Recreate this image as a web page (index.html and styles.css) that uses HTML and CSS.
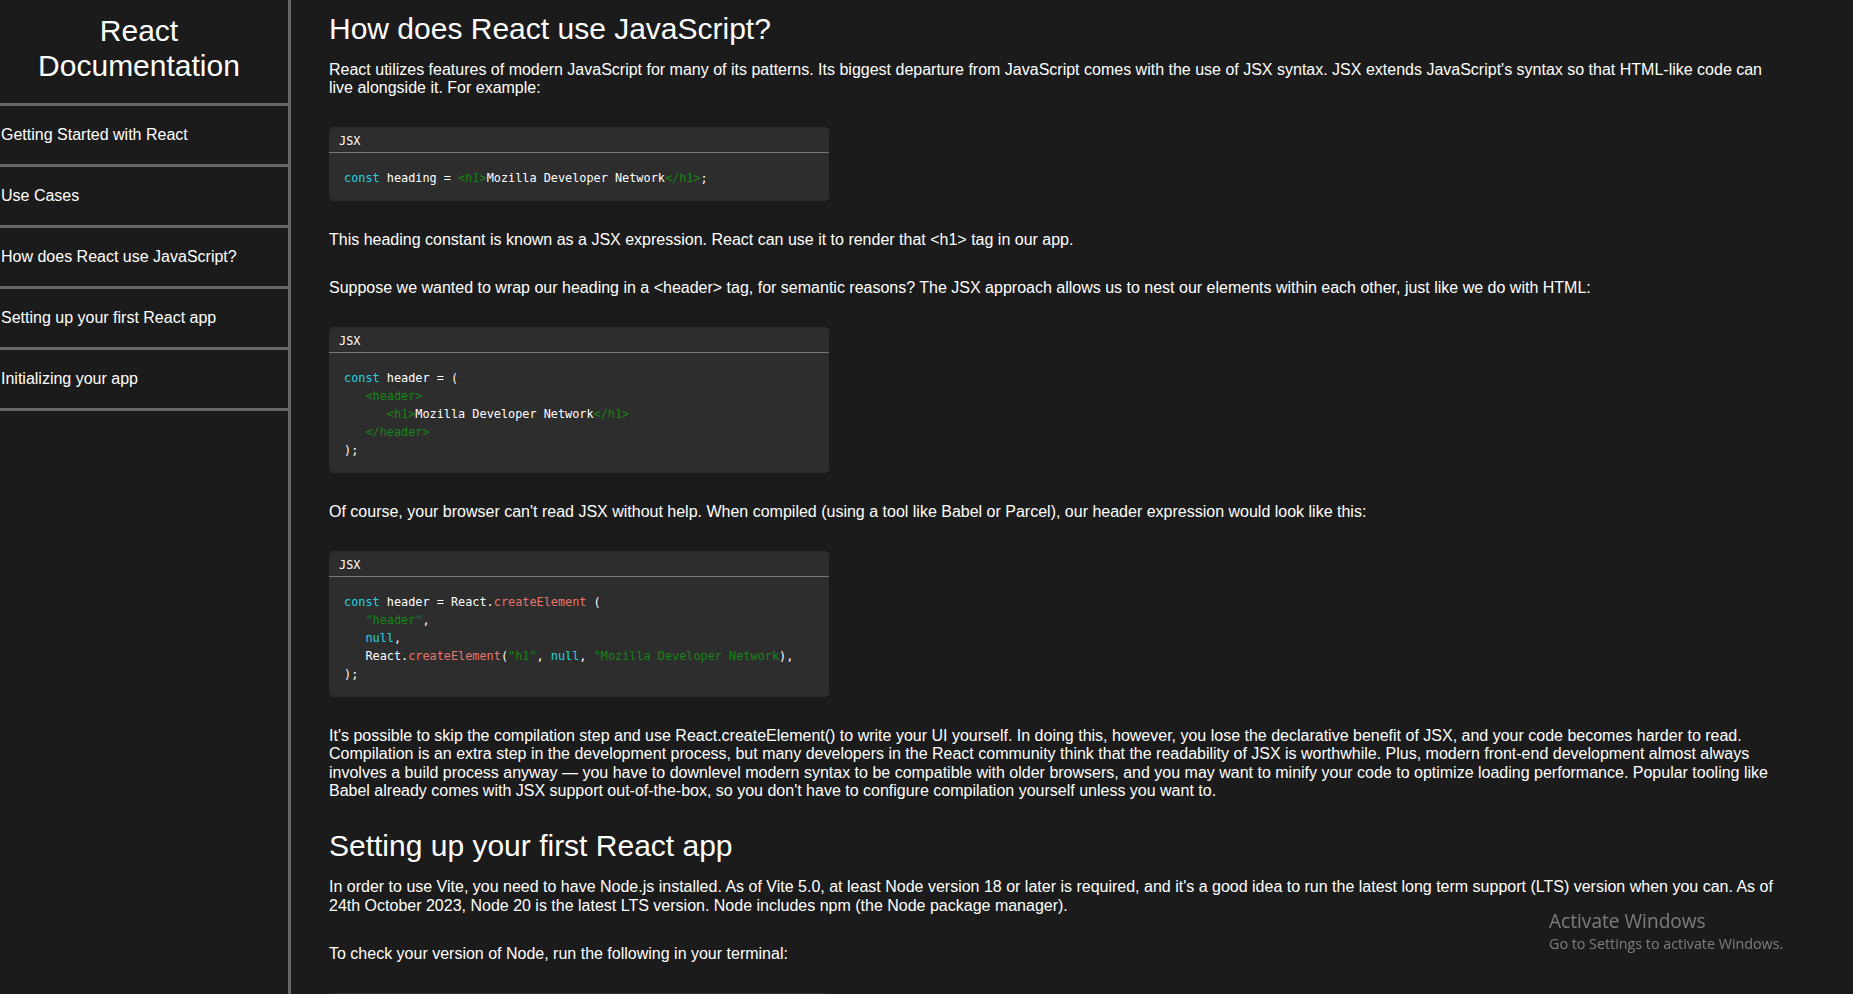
FILE: index.html
```html
<!DOCTYPE html>
<html lang="en">
<head>
<meta charset="utf-8">
<title>React Documentation</title>
<link rel="stylesheet" href="styles.css">
</head>
<body>
<div class="layout">
  <nav class="sidebar">
    <header class="side-title">React<br>Documentation</header>
    <a class="nav-link" href="#getting-started">Getting Started with React</a>
    <a class="nav-link" href="#use-cases">Use Cases</a>
    <a class="nav-link" href="#how-js">How does React use JavaScript?</a>
    <a class="nav-link" href="#setting-up">Setting up your first React app</a>
    <a class="nav-link" href="#initializing">Initializing your app</a>
  </nav>
  <main class="content">
    <section class="doc-section" id="how-js">
      <h2 class="sec-title">How does React use JavaScript?</h2>
      <p class="para">React utilizes features of modern JavaScript for many of its patterns. Its biggest departure from JavaScript comes with the use of JSX syntax. JSX extends JavaScript's syntax so that HTML-like code can live alongside it. For example:</p>
      <div class="code-block">
        <div class="code-head">JSX</div>
        <pre class="code-body"><span class="kw">const</span> heading = <span class="tag">&lt;h1&gt;</span>Mozilla Developer Network<span class="tag">&lt;/h1&gt;</span>;</pre>
      </div>
      <p class="para">This heading constant is known as a JSX expression. React can use it to render that &lt;h1&gt; tag in our app.</p>
      <p class="para">Suppose we wanted to wrap our heading in a &lt;header&gt; tag, for semantic reasons? The JSX approach allows us to nest our elements within each other, just like we do with HTML:</p>
      <div class="code-block">
        <div class="code-head">JSX</div>
        <pre class="code-body"><span class="kw">const</span> header = (
   <span class="tag">&lt;header&gt;</span>
      <span class="tag">&lt;h1&gt;</span>Mozilla Developer Network<span class="tag">&lt;/h1&gt;</span>
   <span class="tag">&lt;/header&gt;</span>
);</pre>
      </div>
      <p class="para">Of course, your browser can't read JSX without help. When compiled (using a tool like Babel or Parcel), our header expression would look like this:</p>
      <div class="code-block">
        <div class="code-head">JSX</div>
        <pre class="code-body"><span class="kw">const</span> header = React.<span class="fn">createElement</span> (
   <span class="str">"header"</span>,
   <span class="kw">null</span>,
   React.<span class="fn">createElement</span>(<span class="str">"h1"</span>, <span class="kw">null</span>, <span class="str">"Mozilla Developer Network</span>),
);</pre>
      </div>
      <p class="para para-long">It's possible to skip the compilation step and use React.createElement() to write your UI yourself. In doing this, however, you lose the declarative benefit of JSX, and your code becomes harder to read. Compilation is an extra step in the development process, but many developers in the React community think that the readability of JSX is worthwhile. Plus, modern front-end development almost always involves a build process anyway — you have to downlevel modern syntax to be compatible with older browsers, and you may want to minify your code to optimize loading performance. Popular tooling like Babel already comes with JSX support out-of-the-box, so you don't have to configure compilation yourself unless you want to.</p>
    </section>
    <section class="doc-section" id="setting-up">
      <h2 class="sec-title">Setting up your first React app</h2>
      <p class="para">In order to use Vite, you need to have Node.js installed. As of Vite 5.0, at least Node version 18 or later is required, and it's a good idea to run the latest long term support (LTS) version when you can. As of 24th October 2023, Node 20 is the latest LTS version. Node includes npm (the Node package manager).</p>
      <p class="para">To check your version of Node, run the following in your terminal:</p>
      <div class="code-block">
        <div class="code-head">bash</div>
        <pre class="code-body">node -v</pre>
      </div>
    </section>
  </main>
</div>
<div class="activate">
  <div class="activate-title">Activate Windows</div>
  <div class="activate-sub">Go to Settings to activate Windows.</div>
</div>
</body>
</html>
```

FILE: styles.css
```css
html, body {
  margin: 0;
  padding: 0;
  background: #1b1b1b;
  color: #ffffff;
  font-family: "Liberation Sans", Arial, sans-serif;
  font-size: 16px;
}

.layout {
  display: flex;
  align-items: stretch;
  min-height: 100vh;
}

.sidebar {
  flex: 0 0 288px;
  width: 288px;
  border-right: 3px solid #666666;
  display: flex;
  flex-direction: column;
}

.side-title {
  text-align: center;
  font-size: 30px;
  line-height: 34.5px;
  padding: 14px 10px 20px 0;
  border-bottom: 3px solid #666666;
}

.nav-link {
  display: flex;
  align-items: center;
  height: 58px;
  padding-left: 1px;
  border-bottom: 3px solid #666666;
  color: #ffffff;
  text-decoration: none;
  font-size: 16px;
}

.content {
  flex: 1 1 auto;
  min-width: 0;
  padding: 0 75px 0 38px;
}

.sec-title {
  font-size: 30px;
  font-weight: normal;
  line-height: 34.5px;
  margin: 12px 0 14px;
}

.doc-section + .doc-section .sec-title {
  margin-top: 0;
  margin-bottom: 15px;
}

.para {
  margin: 0 0 29.6px;
  line-height: 18.4px;
}

.para-long {
  margin-bottom: 28.6px;
}

.code-block {
  width: 500px;
  background: #2d2d2d;
  border-radius: 4px;
  margin: 0 0 29.6px;
  font-family: "DejaVu Sans Mono", "Liberation Mono", monospace;
  font-size: 11.85px;
}

.code-head {
  height: 22px;
  padding-top: 3px;
  line-height: 22px;
  padding-left: 10px;
  border-bottom: 1px solid #7a7a7a;
  color: #ffffff;
}

.code-body {
  margin: 0;
  padding: 16px 14px 14px 15px;
  font-family: inherit;
  font-size: inherit;
  line-height: 18.1px;
  color: #ffffff;
  white-space: pre;
}

.kw { color: #1fd3e2; }
.tag { color: #158515; }
.str { color: #158515; }
.fn { color: #e8746c; }

.activate {
  position: fixed;
  left: 1549px;
  top: 908px;
  color: rgba(255, 255, 255, 0.42);
  font-family: "Open Sans", "Noto Sans", sans-serif;
  pointer-events: none;
}

.activate-title {
  font-size: 19.1px;
  line-height: 26px;
}

.activate-sub {
  font-size: 14.3px;
  line-height: 20px;
}
```
